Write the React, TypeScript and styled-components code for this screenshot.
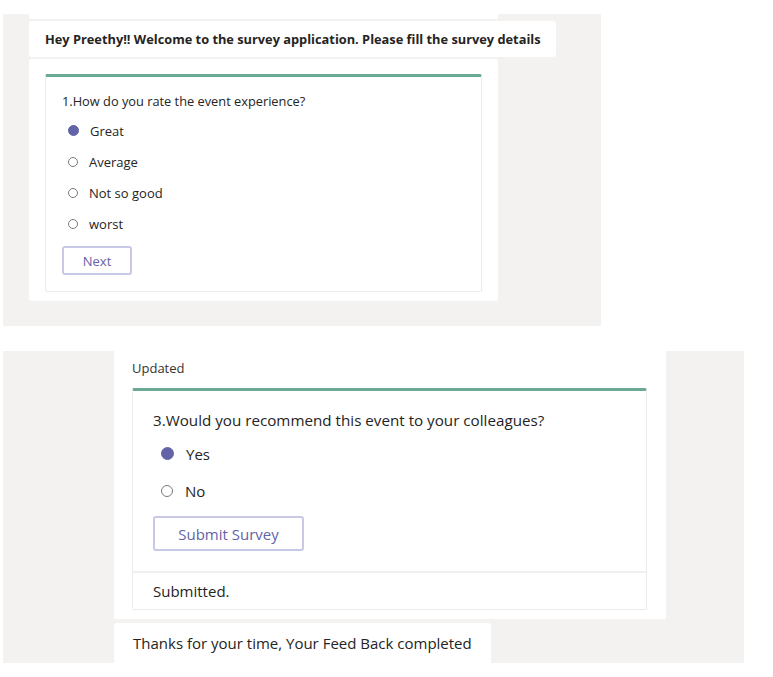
import React from "react";
import styled, { createGlobalStyle } from "styled-components";

const Global = createGlobalStyle`
  html, body { margin: 0; padding: 0; background: #ffffff; }
  body { font-family: "Open Sans", "Noto Sans", sans-serif; color: #252423; }
  * { box-sizing: border-box; }
`;

const Page = styled.div`
  display: flex;
  flex-direction: column;
  padding: 14px 0 0 3px;
`;

const TopPanel = styled.section`
  width: 598px;
  height: 312px;
  background: #f3f2f1;
  display: flex;
  flex-direction: column;
  padding-left: 26px;
`;

const Sliver = styled.div`
  width: 469px;
  height: 5px;
  background: #ffffff;
  margin-bottom: 2px;
`;

const Bubble = styled.div<{ $w: number; $h: number; $size: number; $bold?: boolean; $pad: number }>`
  width: ${(p) => p.$w}px;
  height: ${(p) => p.$h}px;
  background: #ffffff;
  border-radius: 3px;
  display: flex;
  align-items: center;
  padding-left: ${(p) => p.$pad}px;
  font-size: ${(p) => p.$size}px;
  font-weight: ${(p) => (p.$bold ? 700 : 400)};
  color: #252423;
  white-space: nowrap;
`;

const Attachment = styled.div<{ $w: number; $pad: string }>`
  width: ${(p) => p.$w}px;
  background: #ffffff;
  border-radius: 3px;
  padding: ${(p) => p.$pad};
  margin-top: 2px;
`;

const Card = styled.div`
  background: #ffffff;
  border: 1px solid #ebebeb;
  border-top: 3px solid #6aaa93;
  border-radius: 2px;
`;

const CardBody = styled.div<{ $pad: string }>`
  display: flex;
  flex-direction: column;
  padding: ${(p) => p.$pad};
`;

const Question = styled.div<{ $size: number; $h: number }>`
  font-size: ${(p) => p.$size}px;
  line-height: ${(p) => p.$h}px;
  height: ${(p) => p.$h}px;
  color: #252423;
  white-space: nowrap;
`;

const Option = styled.label<{ $size: number; $h: number; $gap: number; $indent: number }>`
  display: flex;
  align-items: center;
  gap: ${(p) => p.$gap}px;
  height: ${(p) => p.$h}px;
  padding-left: ${(p) => p.$indent}px;
  font-size: ${(p) => p.$size}px;
  color: #252423;
`;

const Radio = styled.span<{ $on?: boolean; $d: number }>`
  width: ${(p) => p.$d}px;
  height: ${(p) => p.$d}px;
  border-radius: 50%;
  flex: none;
  background: ${(p) => (p.$on ? "#6264a7" : "#ffffff")};
  border: 1px solid ${(p) => (p.$on ? "#6264a7" : "#7a7a7a")};
`;

const Spacer = styled.div<{ $h: number }>`
  height: ${(p) => p.$h}px;
`;

const Button = styled.button<{ $w: number; $h: number; $size: number }>`
  width: ${(p) => p.$w}px;
  height: ${(p) => p.$h}px;
  background: #ffffff;
  border: 2px solid #c8c9e6;
  border-radius: 3px;
  color: #6264a7;
  font-family: inherit;
  font-size: ${(p) => p.$size}px;
  padding: 0;
  cursor: pointer;
`;

const Footer = styled.div`
  border-top: 2px solid #f0f0f0;
  height: 38px;
  display: flex;
  align-items: center;
  padding-left: 20px;
  font-size: 15px;
`;

const BottomPanel = styled.section`
  margin-top: 25px;
  width: 741px;
  height: 312px;
  background: #f3f2f1;
  display: grid;
  grid-template-columns: 111px 552px;
  align-content: start;
  overflow: hidden;
`;

const Column = styled.div`
  grid-column: 2;
  display: flex;
  flex-direction: column;
`;

const Label = styled.div`
  font-size: 13px;
  height: 37px;
  padding-top: 8px;
  color: #333;
`;

const BottomBubble = styled.div`
  background: #ffffff;
  padding: 0 19px 9px 18px;
`;

const Thanks = styled.div`
  margin-top: 4px;
  width: 377px;
  height: 40px;
  background: #ffffff;
  border-radius: 3px 3px 0 0;
  display: flex;
  align-items: center;
  padding-left: 19px;
  font-size: 15px;
  white-space: nowrap;
`;

export default function App() {
  return (
    <>
      <Global />
      <Page>
        <TopPanel>
          <Sliver />
          <Bubble $w={527} $h={36} $size={12.8} $bold $pad={16}>
            Hey Preethy!! Welcome to the survey application. Please fill the survey details
          </Bubble>
          <Attachment $w={469} $pad="15px 16px 9px 16px">
            <Card>
              <CardBody $pad="10px 0 16px 16px">
                <Question $size={12.8} $h={28}>1.How do you rate the event experience?</Question>
                <Option $size={13} $h={31} $gap={11} $indent={6}><Radio $on $d={11} />Great</Option>
                <Option $size={13} $h={31} $gap={11} $indent={6}><Radio $d={10} />Average</Option>
                <Option $size={13} $h={31} $gap={11} $indent={6}><Radio $d={10} />Not so good</Option>
                <Option $size={13} $h={31} $gap={11} $indent={6}><Radio $d={10} />worst</Option>
                <Spacer $h={7} />
                <Button $w={70} $h={29} $size={13}>Next</Button>
              </CardBody>
            </Card>
          </Attachment>
        </TopPanel>
        <BottomPanel>
          <Column>
            <BottomBubble>
              <Label>Updated</Label>
              <Card>
                <CardBody $pad="15px 0 20px 20px">
                  <Question $size={15.2} $h={29}>3.Would you recommend this event to your colleagues?</Question>
                  <Option $size={15} $h={37} $gap={12} $indent={8}><Radio $on $d={13} />Yes</Option>
                  <Option $size={15} $h={37} $gap={12} $indent={8}><Radio $d={12} />No</Option>
                  <Spacer $h={7} />
                  <Button $w={151} $h={35} $size={15}>Submit Survey</Button>
                </CardBody>
                <Footer>Submitted.</Footer>
              </Card>
            </BottomBubble>
            <Thanks>Thanks for your time, Your Feed Back completed</Thanks>
          </Column>
        </BottomPanel>
      </Page>
    </>
  );
}
